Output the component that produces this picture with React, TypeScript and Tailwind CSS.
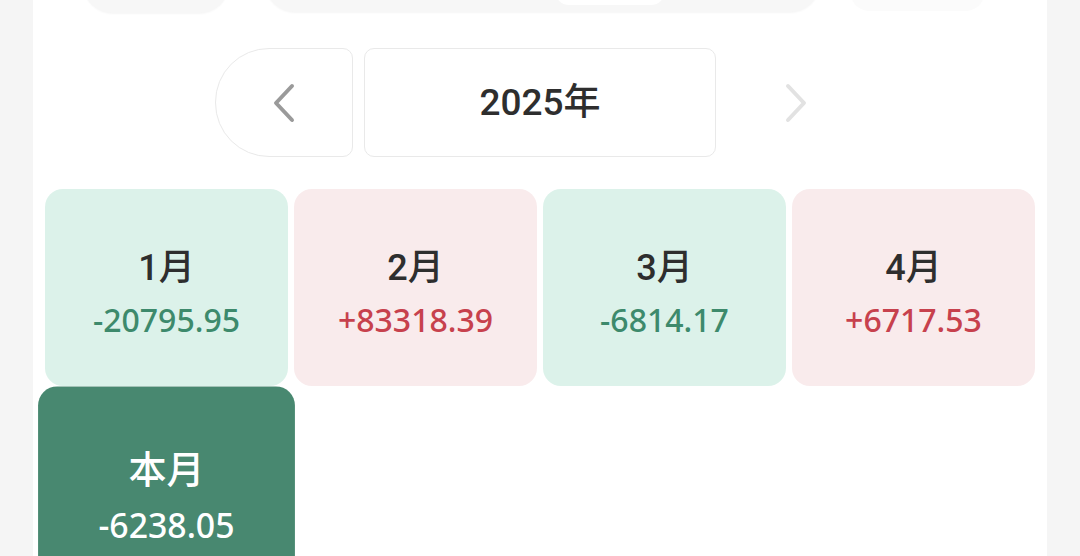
import React from "react";

const months = [
  { label: "1月", value: "-20795.95", up: false },
  { label: "2月", value: "+83318.39", up: true },
  { label: "3月", value: "-6814.17", up: false },
  { label: "4月", value: "+6717.53", up: true },
];

function Chevron({ dir, color }: { dir: "left" | "right"; color: string }) {
  return (
    <svg width="26" height="40" viewBox="0 0 26 40" fill="none">
      {dir === "left" ? (
        <path d="M21 3 L5 20 L21 37" stroke={color} strokeWidth="4" strokeLinecap="round" strokeLinejoin="round" />
      ) : (
        <path d="M5 3 L21 20 L5 37" stroke={color} strokeWidth="4" strokeLinecap="round" strokeLinejoin="round" />
      )}
    </svg>
  );
}

export default function App() {
  return (
    <div
      className="w-[1080px] h-[556px] overflow-hidden bg-[#f5f5f5] flex justify-center"
      style={{ fontFamily: 'Roboto, "Noto Sans CJK SC", sans-serif' }}
    >
      <div className="w-[1014px] h-full bg-white px-[12px]">
        {/* cut-off top controls */}
        <div className="h-[14px] relative">
          <div className="absolute left-[38px] -top-[40px] w-[146px] h-[53px] rounded-b-[30px] bg-[#f7f7f7] shadow-[0_1px_2px_rgba(0,0,0,0.04)]" />
          <div className="absolute left-[220px] -top-[40px] w-[555px] h-[52px] rounded-b-[30px] bg-[#f7f7f7] shadow-[0_1px_2px_rgba(0,0,0,0.04)]">
            <div className="absolute left-[290px] top-[30px] w-[110px] h-[15px] rounded-b-[14px] bg-white" />
          </div>
          <div className="absolute left-[805px] -top-[40px] w-[135px] h-[51px] rounded-b-[20px] bg-[#fbfbfb]" />
        </div>

        {/* year nav */}
        <div className="mt-[34px] flex justify-center gap-[11px]">
          <div className="w-[138px] h-[109px] border border-[#e9e9e9] rounded-l-[54px] rounded-r-[10px] flex items-center justify-center">
            <Chevron dir="left" color="#9a9a9a" />
          </div>
          <div className="w-[352px] h-[109px] border border-[#e9e9e9] rounded-[10px] flex items-center justify-center text-[37px] font-medium text-[#2e2e2e]">
            2025年
          </div>
          <div className="w-[138px] h-[109px] flex items-center justify-center">
            <Chevron dir="right" color="#e2e2e2" />
          </div>
        </div>

        {/* month grid */}
        <div className="mt-[32px] grid grid-cols-4 gap-[6px]">
          {months.map((m) => (
            <div
              key={m.label}
              className={`h-[197px] rounded-[18px] flex flex-col items-center justify-center pt-[10px] ${
                m.up ? "bg-[#f9ebec]" : "bg-[#dcf2ea]"
              }`}
            >
              <div className="text-[36px] leading-[48px] font-medium text-[#2e2e2e]">{m.label}</div>
              <div
                className={`mt-[6px] text-[32px] leading-[44px] font-medium font-['Noto_Sans',sans-serif] ${
                  m.up ? "text-[#c7414d]" : "text-[#3d8a6c]"
                }`}
              >
                {m.value}
              </div>
            </div>
          ))}
          <div className="h-[197px] rounded-[18px] bg-[#488870] flex flex-col items-center justify-center pt-[10px] scale-[1.057]">
            <div className="text-[36px] leading-[48px] font-medium text-white">本月</div>
            <div className="mt-[6px] text-[32px] leading-[44px] font-medium font-['Noto_Sans',sans-serif] text-white">
              -6238.05
            </div>
          </div>
        </div>
      </div>
    </div>
  );
}
